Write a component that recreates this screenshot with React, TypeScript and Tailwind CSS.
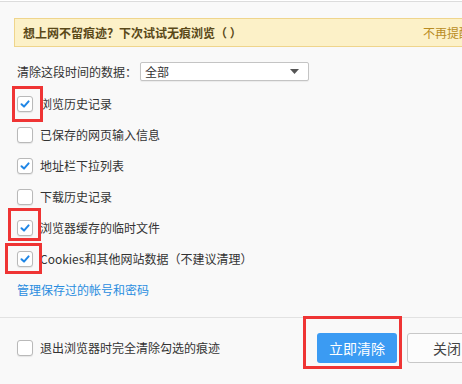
const font = { fontFamily: '"Noto Sans CJK SC", "Noto Sans", sans-serif' };

type Item = { label: string; checked: boolean; mark?: string };

const items: Item[] = [
  { label: '浏览历史记录', checked: true, mark: 'left-[-5px] top-[-10px] w-[31px] h-[36px]' },
  { label: '已保存的网页输入信息', checked: false },
  { label: '地址栏下拉列表', checked: true },
  { label: '下载历史记录', checked: false },
  { label: '浏览器缓存的临时文件', checked: true, mark: 'left-[-9px] top-[-12px] w-[33px] h-[33px]' },
  { label: 'Cookies和其他网站数据（不建议清理）', checked: true, mark: 'left-[-12px] top-[-8px] w-[37px] h-[31px]' },
];

function Checkbox({ checked }: { checked: boolean }) {
  return (
    <div className="w-4 h-4 shrink-0 rounded-[3px] border border-[#b9b9b9] bg-white shadow-[0_1px_1px_rgba(0,0,0,0.08)] flex items-center justify-center">
      {checked && (
        <svg width="12" height="12" viewBox="0 0 12 12">
          <polyline points="2.5,6.3 5,8.6 9.6,3.4" fill="none" stroke="#1f86e6" strokeWidth="2" strokeLinecap="round" strokeLinejoin="round" />
        </svg>
      )}
    </div>
  );
}

export default function App() {
  return (
    <div className="w-[462px] h-[384px] overflow-hidden bg-[#f9f9f9] text-[#333]" style={font}>
      <div className="h-px bg-white" />
      <div className="h-px bg-[#dcdcdc]" />

      <div className="ml-[14px] mt-[16px] w-[470px] h-[29px] border border-[#efd58c] bg-[#fcf1c8] flex items-center pl-[8px] whitespace-nowrap">
        <span className="w-[400px] shrink-0 text-[12px] font-bold text-[#5a4919]">想上网不留痕迹？下次试试无痕浏览（ ）</span>
        <span className="shrink-0 text-[12px] text-[#b98c22]">不再提醒</span>
      </div>

      <div className="ml-[17px] mt-[15px] flex items-center h-[19px]">
        <span className="text-[12px] w-[123px]">清除这段时间的数据：</span>
        <div className="w-[169px] h-[19px] rounded-[2px] border border-[#c4c4c4] bg-white flex items-center justify-between pl-[4px] pr-[9px] shadow-[0_1px_1px_rgba(0,0,0,0.06)]">
          <span className="text-[12px] text-[#333]">全部</span>
          <svg width="9" height="5" viewBox="0 0 9 5">
            <polygon points="0,0 9,0 4.5,5" fill="#555" />
          </svg>
        </div>
      </div>

      <div className="ml-[17px] mt-[15px] flex flex-col gap-[15px]">
        {items.map((item) => (
          <div key={item.label} className="relative flex items-center h-4">
            <Checkbox checked={item.checked} />
            <span className="ml-[7px] text-[12px] text-[#333]">{item.label}</span>
            {item.mark && <div className={`absolute border-[3px] border-[#ef3434] ${item.mark}`} />}
          </div>
        ))}
      </div>

      <div className="ml-[17px] mt-[15px] text-[12px] leading-4 text-[#2a8ddf]">管理保存过的帐号和密码</div>

      <div className="mt-[19px] h-px bg-[#e2e2e2]" />

      <div className="flex items-center mt-[15px] h-[30px] whitespace-nowrap">
        <div className="ml-[17px] w-[300px] shrink-0 flex items-center">
          <Checkbox checked={false} />
          <span className="ml-[7px] text-[12px] text-[#333]">退出浏览器时完全清除勾选的痕迹</span>
        </div>
        <div className="relative shrink-0">
          <div className="w-[80px] h-[30px] rounded-[3px] bg-[#3b9bf3] text-white text-[14px] flex items-center justify-center">
            立即清除
          </div>
          <div className="absolute left-[-14px] top-[-17px] w-[99px] h-[53px] border-[3px] border-[#ef3434]" />
        </div>
        <div className="ml-[10px] w-[70px] h-[30px] shrink-0 rounded-[3px] border border-[#c8c8c8] bg-[#fcfcfc] text-[14px] text-[#444] flex items-center pl-[25px]">
          关闭
        </div>
      </div>
    </div>
  );
}
